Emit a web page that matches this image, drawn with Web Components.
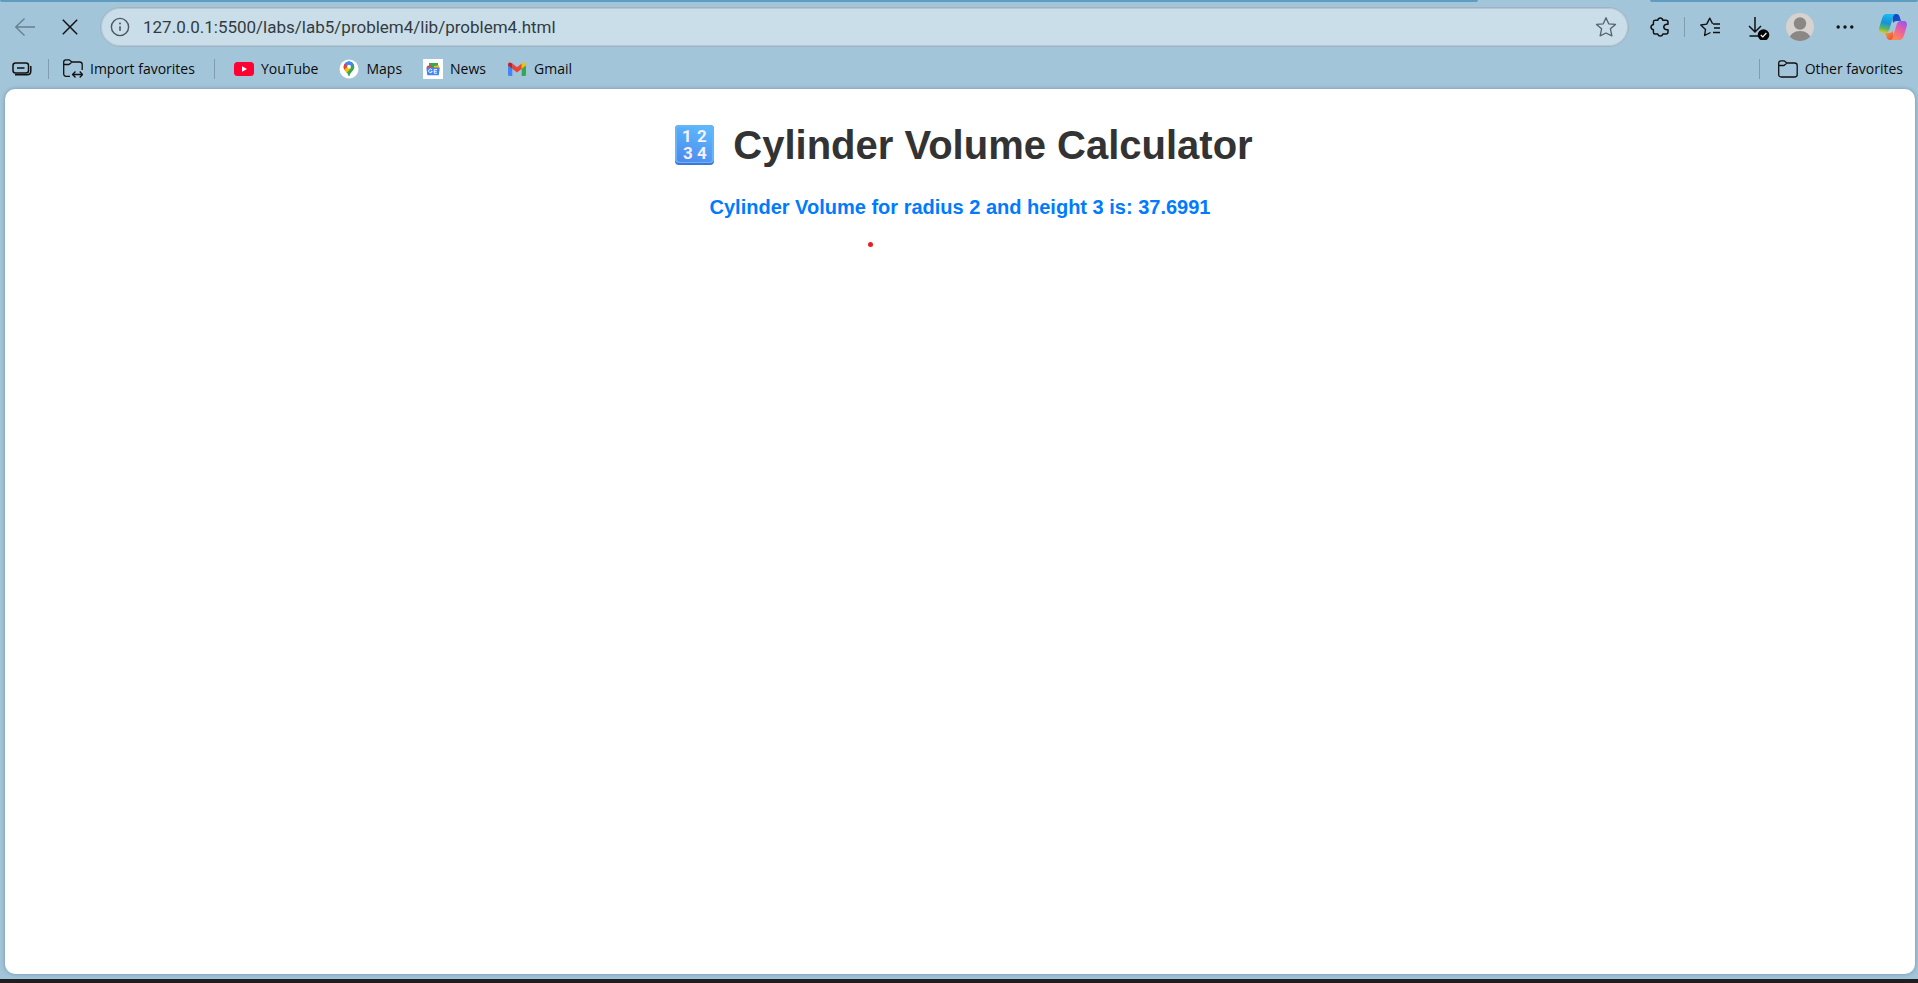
<!DOCTYPE html>
<html lang="en">
<head>
<meta charset="utf-8">
<title>Cylinder Volume Calculator</title>
<style>
  html, body { height: 100%; }
  body { margin: 0; background: #a3c5da; font-family: "Open Sans", "Noto Sans", sans-serif; }
</style>
</head>
<body>
<browser-window></browser-window>

<script>
const define = (name, html) => {
  const template = document.createElement('template');
  template.innerHTML = html;
  customElements.define(name, class extends HTMLElement {
    constructor() {
      super();
      this.attachShadow({ mode: 'open' }).append(template.content.cloneNode(true));
    }
  });
};

/* A toolbar button: the slotted SVG is its face. */
customElements.define('tool-button', class extends HTMLElement {
  connectedCallback() {
    const root = this.attachShadow({ mode: 'open' });
    root.innerHTML = `
      <style>
        :host { display: block; flex: none; }
        button { display: flex; align-items: center; justify-content: center; width: 40px; height: 32px;
                 margin: 0; padding: 0; border: 0; background: none; color: inherit; font: inherit; }
      </style>
      <button type="button"><slot></slot></button>`;
    root.querySelector('button').setAttribute('aria-label', this.getAttribute('label'));
  }
});

/* A favourite: icon slot, then its name. */
customElements.define('bookmark-link', class extends HTMLElement {
  connectedCallback() {
    const root = this.attachShadow({ mode: 'open' });
    root.innerHTML = `
      <style>
        :host { display: block; flex: none; }
        a { display: flex; align-items: center; gap: 7px; color: #0b0b0b; font-size: 14px; line-height: 20px;
            text-decoration: none; white-space: nowrap; }
      </style>
      <a href="#"><slot name="icon"></slot><span><slot></slot></span></a>`;
  }
});

define('bar-divider', `
  <style>:host { display: block; flex: none; width: 1px; height: 20px; background: #7f9dae; }</style>`);

define('address-bar', `
  <style>
    :host { display: block; flex: 1; min-width: 0; }
    form { display: flex; align-items: center; box-sizing: border-box; height: 40px; padding: 0 9px;
           border: 1px solid #9fb3c3; border-radius: 20px; background: #c9dee9; box-shadow: inset 0 0 0 1px #b3c7d4; }
    svg { flex: none; }
    input { flex: 1; min-width: 0; margin: 0 12px 0 13px; padding: 0; border: 0; outline: 0; background: none;
            color: #343b40; font: 17px/24px Roboto, "Noto Sans", sans-serif; }
    button { display: flex; margin: 0 2px 0 0; padding: 0; border: 0; background: none; }
  </style>
  <form>
    <svg width="20" height="20" viewBox="0 0 20 20" fill="none" stroke="#4d575e" stroke-width="1.4">
      <circle cx="10" cy="10" r="8.6"/><path d="M10 9.2v4.6" stroke-width="1.6"/><circle cx="10" cy="6.6" r="1" fill="#4d575e" stroke="none"/>
    </svg>
    <input type="text" aria-label="Address" value="127.0.0.1:5500/labs/lab5/problem4/lib/problem4.html">
    <button type="button" aria-label="Add this page to favorites">
      <svg width="22" height="22" viewBox="0 0 22 22" fill="none" stroke="#56626a" stroke-width="1.3" stroke-linejoin="round">
        <path d="M11 1.8l2.7 6 6.8.6-5.1 4.4 1.5 7L11 17l-5.9 2.8 1.5-7L1.5 8.4l6.8-.6z"/>
      </svg>
    </button>
  </form>`);

define('tool-bar', `
  <style>
    :host { display: flex; align-items: center; height: 40px; padding: 0 5px; color: #111; }
    svg { display: block; }
    .nav, .actions { display: flex; align-items: center; flex: none; }
    .nav { gap: 5px; padding-right: 10px; }
    .actions { padding-left: 11px; }
    bar-divider { margin: 0 5px 0 4px; }
    .spaced { display: flex; gap: 5px; align-items: center; }
    .spaced tool-button:last-child { margin-left: 3px; }
  </style>
  <div class="nav">
    <tool-button label="Back">
      <svg width="20" height="20" viewBox="0 0 20 20" fill="none" stroke="#668090" stroke-width="1.3"><path d="M20 10H.8M9.500 1.500L.8 10l8.700 8.500"/></svg>
    </tool-button>
    <tool-button label="Stop">
      <svg width="16" height="16" viewBox="0 0 16 16" fill="none" stroke="#111" stroke-width="1.5"><path d="M.8.8l14.4 14.4M15.2.8L.8 15.2"/></svg>
    </tool-button>
  </div>
  <address-bar></address-bar>
  <div class="actions">
    <tool-button label="Extensions">
      <svg width="20" height="20" viewBox="0 0 20 20" fill="none" stroke="#111" stroke-width="1.5" stroke-linejoin="round">
        <path d="M5 3.200H7.700Q8.300 .9 10.300 .9T12.900 3.200H16Q18 3.200 18 5.200V7.200H16.500Q13.800 7.800 13.800 10T16.500 12.800H18V15Q18 17 16 17H12.900Q12.300 19.100 10.300 19.100T7.700 17H5Q3.400 17 3.400 15.200V12.700Q1 12 1 10T3.400 7.400V5Q3.400 3.200 5 3.200z"/>
      </svg>
    </tool-button>
    <bar-divider></bar-divider>
    <div class="spaced">
      <tool-button label="Favorites">
        <svg width="20" height="20" viewBox="0 0 20 20" fill="none" stroke="#111" stroke-width="1.4" stroke-linejoin="round">
          <path d="M10.5 15.500L4.600 18.500l.9-6L.8 8l5.900-.9L9.800 1.200l2.800 5.600M13 7h7M14 11h6M13 15.500h7"/>
        </svg>
      </tool-button>
      <tool-button label="Downloads">
        <svg width="30" height="26" viewBox="-6 0 30 26" fill="none" stroke="#111" stroke-width="1.5">
          <path d="M9 3v15M3 12l6 6 6-6M3.500 22H12"/><circle cx="17.500" cy="21" r="5.800" fill="#050505" stroke="none"/><path d="M14.800 21l2 2 3.600-4" stroke="#fff" stroke-width="1.200"/>
        </svg>
      </tool-button>
      <tool-button label="Profile">
        <svg width="28" height="28" viewBox="0 0 28 28"><clipPath id="face"><circle cx="14" cy="14" r="14"/></clipPath>
          <g clip-path="url(#face)"><rect width="28" height="28" fill="#d5d2cf"/><circle cx="14" cy="10.500" r="6.200" fill="#8b8784"/><ellipse cx="14" cy="26" rx="10.500" ry="8" fill="#8b8784"/></g></svg>
      </tool-button>
      <tool-button label="Settings and more">
        <svg width="18" height="6" viewBox="0 0 18 6" fill="#111"><circle cx="2.200" cy="3" r="1.700"/><circle cx="9" cy="3" r="1.700"/><circle cx="15.800" cy="3" r="1.700"/></svg>
      </tool-button>
      <tool-button label="Copilot">
        <svg width="28" height="26" viewBox="0 0 28 26">
          <defs>
            <linearGradient id="cool" x1=".4" y1="0" x2=".2" y2="1"><stop offset="0" stop-color="#16b9f1"/><stop offset=".45" stop-color="#1692d8"/><stop offset=".75" stop-color="#57b66b"/><stop offset="1" stop-color="#eecb10"/></linearGradient>
            <linearGradient id="warm" x1=".8" y1="0" x2=".3" y2="1"><stop offset="0" stop-color="#9a55f0"/><stop offset=".5" stop-color="#f0609a"/><stop offset="1" stop-color="#ff8c50"/></linearGradient>
            <linearGradient id="navy" x1="0" y1="0" x2="1" y2="1"><stop offset="0" stop-color="#0a3fb5"/><stop offset="1" stop-color="#2158d8"/></linearGradient>
            <linearGradient id="fire" x1="0" y1="0" x2="1" y2="1"><stop offset="0" stop-color="#f7a531"/><stop offset="1" stop-color="#ee4038"/></linearGradient>
          </defs>
          <path d="M13 0h4.500q2.300 0 3 2.200L22 7h-4.500q-2.300 0-3.500 2z" fill="url(#navy)"/>
          <path d="M15 26h-4q-2.500 0-3.200-2.200L6.200 19h4.500q2 0 3-2z" fill="url(#fire)"/>
          <path d="M7.500 0H17q-2 0-2.700 2.200L10.500 15q-1.200 4-4.500 4H3.500Q-.8 19 .3 13.500L3.200 4Q4.500 0 7.500 0z" fill="url(#cool)"/>
          <path d="M20.500 26H11q2 0 2.700-2.200L17.500 11q1.200-4 4.500-4h2.500q4.300 0 3.200 5.500L24.800 22q-1.300 4-4.300 4z" fill="url(#warm)"/>
        </svg>
      </tool-button>
    </div>
  </div>`);

define('favorites-bar', `
  <style>
    :host { display: flex; align-items: center; justify-content: space-between; box-sizing: border-box; height: 42px; padding: 1px 15px 0 12px; }
    nav { display: flex; align-items: center; }
    svg { display: block; flex: none; }
    button { display: flex; margin: 0; padding: 0; border: 0; background: none; }
    .tools bar-divider { margin: 0 14px 0 16px; }
    .tools bookmark-link + bar-divider { margin-left: 19px; }
    .tools bar-divider + .sites { margin-left: 5px; }
    .sites { display: flex; gap: 21px; }
    .other bar-divider { margin-right: 18px; }
  </style>
  <nav class="tools" aria-label="Favorites">
    <button type="button" aria-label="Workspaces">
      <svg width="20" height="16" viewBox="0 0 20 16" fill="none" stroke="#111" stroke-width="1.500" stroke-linejoin="round">
        <rect x="1" y="2" width="15.500" height="10" rx="2.500"/><path d="M5 7h7.500M3 13.800h12q3.800 0 3.800-3.800V5"/>
      </svg>
    </button>
    <bar-divider></bar-divider>
    <bookmark-link>
      <svg slot="icon" width="20" height="20" viewBox="0 0 20 20" fill="none" stroke="#111" stroke-width="1.300" stroke-linejoin="round">
        <path d="M7 17.300H3.300Q.7 17.300.7 14.800V3Q.7.800 3 .800h3L9 3h7.500q2.700 0 2.700 2.500V11M.8 5.500H6L9 3M10 15.500h9.500M12.500 12.500l-3 3 3 3M16.700 12.500l3 3-3 3"/>
      </svg>Import favorites</bookmark-link>
    <bar-divider></bar-divider>
    <div class="sites">
      <bookmark-link>
        <svg slot="icon" width="20" height="20" viewBox="0 0 20 20"><rect y="3" width="20" height="14" rx="3.500" fill="#ff0033"/><path d="M8 7.200v5.600l5-2.800z" fill="#fff"/></svg>YouTube</bookmark-link>
      <bookmark-link>
        <svg slot="icon" width="20" height="20" viewBox="0 0 20 20">
          <clipPath id="pin"><path d="M10 2.500a5.300 5.300 0 0 1 5.300 5.200c0 4-4.300 5.300-4.800 9.300h-1c-.5-4-4.800-5.300-4.800-9.300A5.300 5.300 0 0 1 10 2.500z"/></clipPath>
          <circle cx="10" cy="10" r="9.500" fill="#fff"/>
          <g clip-path="url(#pin)"><rect width="20" height="20" fill="#34a853"/><path d="M0 15L15 3 9 0 0 5z" fill="#4285f4"/><path d="M3 3l7 5-6 5z" fill="#ea4335"/><path d="M3 12l7-5 2 2-6 7z" fill="#fbbc04"/><path d="M6 0h10v5l-6 3z" fill="#4285f4"/></g>
          <circle cx="10" cy="7.700" r="1.900" fill="#fff"/>
        </svg>Maps</bookmark-link>
      <bookmark-link>
        <svg slot="icon" width="20" height="20" viewBox="0 0 20 20">
          <rect width="20" height="20" fill="#fff"/><rect x="6" y="4" width="9" height="5" fill="#34a853"/><path d="M3.800 7l5-1 1 5H4z" fill="#ea4335"/><path d="M11 7l5-.8v4h-5z" fill="#fbbc04"/>
          <path d="M3.300 8.500h13.500l-1 7.700H4.300z" fill="#4285f4"/>
          <path d="M9 10.900a1.800 1.800 0 1 0 .2 1.500H7.800M14 10.500h-2.800v3.700H14m-2.800-1.900h2.600" fill="none" stroke="#fff" stroke-width=".9"/>
        </svg>News</bookmark-link>
      <bookmark-link>
        <svg slot="icon" width="20" height="20" viewBox="0 0 20 20">
          <path d="M1 5v10.500Q1 17 2.500 17H5.300V8z" fill="#4285f4"/><path d="M19 5v10.500q0 1.500-1.500 1.500h-2.800V8z" fill="#34a853"/><path d="M5.300 4.500L10 8.300l4.700-3.800v5.300L10 13.600 5.300 9.800z" fill="#ea4335"/><path d="M14.700 4.500q4.300-2.500 4.300 1.300v.8l-4.300 3.200z" fill="#fbbc04"/><path d="M5.300 4.500Q1 2 1 5.800v.8l4.300 3.200z" fill="#c5221f"/>
        </svg>Gmail</bookmark-link>
    </div>
  </nav>
  <nav class="other" aria-label="More favorites">
    <bar-divider></bar-divider>
    <bookmark-link>
      <svg slot="icon" width="20" height="20" viewBox="0 0 20 20" fill="none" stroke="#111" stroke-width="1.300" stroke-linejoin="round">
        <path d="M3.300 18Q.7 18 .7 15.500V4Q.7 1.800 3 1.800h3L9 4h7.500q2.700 0 2.700 2.500v9q0 2.500-2.700 2.500zM.8 6.500H6L9 4"/>
      </svg>Other favorites</bookmark-link>
  </nav>`);

define('volume-page', `
  <style>
    :host { display: block; position: relative; box-sizing: border-box; padding: 33px 20px 20px; border-radius: 10px; background: #fff;
            box-shadow: 0 0 4px #6d93aa; font-family: Arial, "Liberation Sans", sans-serif; text-align: center; }
    h1 { display: flex; align-items: center; justify-content: center; gap: 11px; margin: 0; color: #333; font-size: 40px; line-height: 46px; }
    svg { flex: none; }
    p { margin: 27px 0 0; color: #007bff; font-size: 20px; font-weight: bold; line-height: 24px; }
    i { position: absolute; top: 153px; left: calc(50% - 92px); width: 5px; height: 5px; border-radius: 50%; background: #ec1c24; }
  </style>
  <h1>
    <svg width="55" height="40" viewBox="0 0 55 40" role="img" aria-label="Input numbers" font-family="Roboto, sans-serif" font-weight="700" font-size="17" fill="#f4f0ff" text-anchor="middle">
      <defs><linearGradient id="key" x1=".7" y1="0" x2=".3" y2="1"><stop offset="0" stop-color="#5cb8fb"/><stop offset="1" stop-color="#4d8cee"/></linearGradient></defs>
      <rect x="8" y="0" width="39" height="40" rx="4" fill="#3f76d8"/><rect x="8" y="0" width="39" height="38" rx="4" fill="#66b5f6"/><rect x="10" y="2" width="35" height="35" rx="3" fill="url(#key)"/>
      <text x="20" y="17">1</text><text x="35" y="17">2</text><text x="21" y="34">3</text><text x="35" y="34">4</text>
    </svg>
    <span>Cylinder Volume Calculator</span>
  </h1>
  <p>Cylinder Volume for radius 2 and height 3 is: 37.6991</p>
  <i></i>`);

define('browser-window', `
  <style>
    :host { display: flex; flex-direction: column; box-sizing: border-box; min-height: 100vh; border-bottom: 4px solid #201d1e; }
    .tabs { display: flex; height: 2px; margin-bottom: 5px; gap: 9%; }
    .tabs div { background: #5e9dc1; border-radius: 0 0 3px 3px; }
    .tabs div:first-child { flex: 1480; }
    .tabs div:last-child { flex: 268; }
    volume-page { flex: 1; margin: 0 3px 5px 5px; }
  </style>
  <div class="tabs"><div></div><div></div></div>
  <tool-bar></tool-bar>
  <favorites-bar></favorites-bar>
  <volume-page></volume-page>`);
</script>
</body>
</html>
